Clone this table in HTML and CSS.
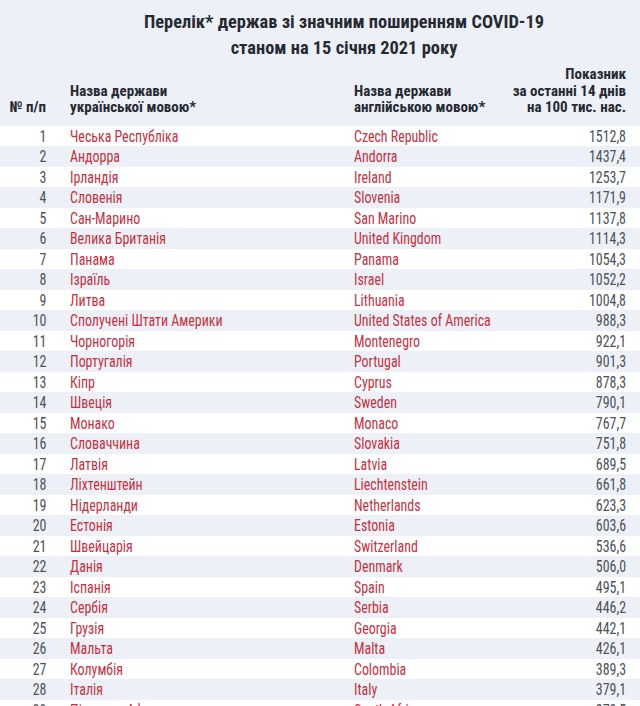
FILE: index.html
```html
<!DOCTYPE html>
<html lang="uk">
<head>
<meta charset="utf-8">
<title>Перелік держав</title>
<link rel="stylesheet" href="styles.css">
</head>
<body>
<div class="page">
  <h1 class="title">Перелік* держав зі значним поширенням COVID-19<br>станом на 15 січня 2021 року</h1>
  <div class="head">
    <div class="c-num">№ п/п</div>
    <div class="c-ua">Назва держави<br>української мовою*</div>
    <div class="c-en">Назва держави<br>англійською мовою*</div>
    <div class="c-val">Показник<br>за останні 14 днів<br>на 100 тис. нас.</div>
  </div>
  <div class="rows">
    <div class="row"><div class="c-num">1</div><div class="c-ua">Чеська Республіка</div><div class="c-en">Czech Republic</div><div class="c-val">1512,8</div></div>
    <div class="row"><div class="c-num">2</div><div class="c-ua">Андорра</div><div class="c-en">Andorra</div><div class="c-val">1437,4</div></div>
    <div class="row"><div class="c-num">3</div><div class="c-ua">Ірландія</div><div class="c-en">Ireland</div><div class="c-val">1253,7</div></div>
    <div class="row"><div class="c-num">4</div><div class="c-ua">Словенія</div><div class="c-en">Slovenia</div><div class="c-val">1171,9</div></div>
    <div class="row"><div class="c-num">5</div><div class="c-ua">Сан-Марино</div><div class="c-en">San Marino</div><div class="c-val">1137,8</div></div>
    <div class="row"><div class="c-num">6</div><div class="c-ua">Велика Британія</div><div class="c-en">United Kingdom</div><div class="c-val">1114,3</div></div>
    <div class="row"><div class="c-num">7</div><div class="c-ua">Панама</div><div class="c-en">Panama</div><div class="c-val">1054,3</div></div>
    <div class="row"><div class="c-num">8</div><div class="c-ua">Ізраїль</div><div class="c-en">Israel</div><div class="c-val">1052,2</div></div>
    <div class="row"><div class="c-num">9</div><div class="c-ua">Литва</div><div class="c-en">Lithuania</div><div class="c-val">1004,8</div></div>
    <div class="row"><div class="c-num">10</div><div class="c-ua">Сполучені Штати Америки</div><div class="c-en">United States of America</div><div class="c-val">988,3</div></div>
    <div class="row"><div class="c-num">11</div><div class="c-ua">Чорногорія</div><div class="c-en">Montenegro</div><div class="c-val">922,1</div></div>
    <div class="row"><div class="c-num">12</div><div class="c-ua">Португалія</div><div class="c-en">Portugal</div><div class="c-val">901,3</div></div>
    <div class="row"><div class="c-num">13</div><div class="c-ua">Кіпр</div><div class="c-en">Cyprus</div><div class="c-val">878,3</div></div>
    <div class="row"><div class="c-num">14</div><div class="c-ua">Швеція</div><div class="c-en">Sweden</div><div class="c-val">790,1</div></div>
    <div class="row"><div class="c-num">15</div><div class="c-ua">Монако</div><div class="c-en">Monaco</div><div class="c-val">767,7</div></div>
    <div class="row"><div class="c-num">16</div><div class="c-ua">Словаччина</div><div class="c-en">Slovakia</div><div class="c-val">751,8</div></div>
    <div class="row"><div class="c-num">17</div><div class="c-ua">Латвія</div><div class="c-en">Latvia</div><div class="c-val">689,5</div></div>
    <div class="row"><div class="c-num">18</div><div class="c-ua">Ліхтенштейн</div><div class="c-en">Liechtenstein</div><div class="c-val">661,8</div></div>
    <div class="row"><div class="c-num">19</div><div class="c-ua">Нідерланди</div><div class="c-en">Netherlands</div><div class="c-val">623,3</div></div>
    <div class="row"><div class="c-num">20</div><div class="c-ua">Естонія</div><div class="c-en">Estonia</div><div class="c-val">603,6</div></div>
    <div class="row"><div class="c-num">21</div><div class="c-ua">Швейцарія</div><div class="c-en">Switzerland</div><div class="c-val">536,6</div></div>
    <div class="row"><div class="c-num">22</div><div class="c-ua">Данія</div><div class="c-en">Denmark</div><div class="c-val">506,0</div></div>
    <div class="row"><div class="c-num">23</div><div class="c-ua">Іспанія</div><div class="c-en">Spain</div><div class="c-val">495,1</div></div>
    <div class="row"><div class="c-num">24</div><div class="c-ua">Сербія</div><div class="c-en">Serbia</div><div class="c-val">446,2</div></div>
    <div class="row"><div class="c-num">25</div><div class="c-ua">Грузія</div><div class="c-en">Georgia</div><div class="c-val">442,1</div></div>
    <div class="row"><div class="c-num">26</div><div class="c-ua">Мальта</div><div class="c-en">Malta</div><div class="c-val">426,1</div></div>
    <div class="row"><div class="c-num">27</div><div class="c-ua">Колумбія</div><div class="c-en">Colombia</div><div class="c-val">389,3</div></div>
    <div class="row"><div class="c-num">28</div><div class="c-ua">Італія</div><div class="c-en">Italy</div><div class="c-val">379,1</div></div>
    <div class="row"><div class="c-num">29</div><div class="c-ua">Південна Африка</div><div class="c-en">South Africa</div><div class="c-val">373,5</div></div>
  </div>
</div>
</body>
</html>
```

FILE: styles.css
```css
html, body {
  margin: 0;
  padding: 0;
  background: #edf1f7;
  overflow: hidden;
}

.page {
  width: 640px;
  font-family: "Roboto Condensed", "Liberation Sans Narrow", "DejaVu Sans Condensed", "Liberation Sans", sans-serif;
  font-stretch: condensed;
}

.title {
  margin: 0;
  padding: 9.4px 0 0 48px;
  text-align: center;
  font-size: 18.4px;
  line-height: 26px;
  font-weight: bold;
  color: #262a33;
}

.head {
  display: grid;
  grid-template-columns: 46px 260px 118px 130px;
  column-gap: 24px;
  padding-right: 14px;
  align-items: end;
  margin-top: 4.5px;
  padding-bottom: 9.7px;
  font-size: 15px;
  line-height: 16.8px;
  font-weight: bold;
  color: #262a33;
  white-space: nowrap;
}

.head .c-num,
.head .c-val {
  text-align: right;
}

/* condensed data table: laid out wide, then narrowed to the page width */
.rows {
  width: 800px;
  transform: scaleX(0.8);
  transform-origin: 0 0;
  font-size: 17.4px;
  font-weight: 400;
}

.row {
  display: grid;
  grid-template-columns: 58px 325.5px 160.5px 150px;
  column-gap: 29.5px;
  padding-right: 17.5px;
  height: 20.5px;
  line-height: 20.5px;
  align-items: center;
  white-space: nowrap;
}

.row:nth-child(odd) {
  background: #ffffff;
}

.row .c-num {
  text-align: right;
  color: #4d5159;
}

.row .c-ua,
.row .c-en {
  color: #c4323f;
}

.row .c-val {
  text-align: right;
  color: #4d5159;
}
```
